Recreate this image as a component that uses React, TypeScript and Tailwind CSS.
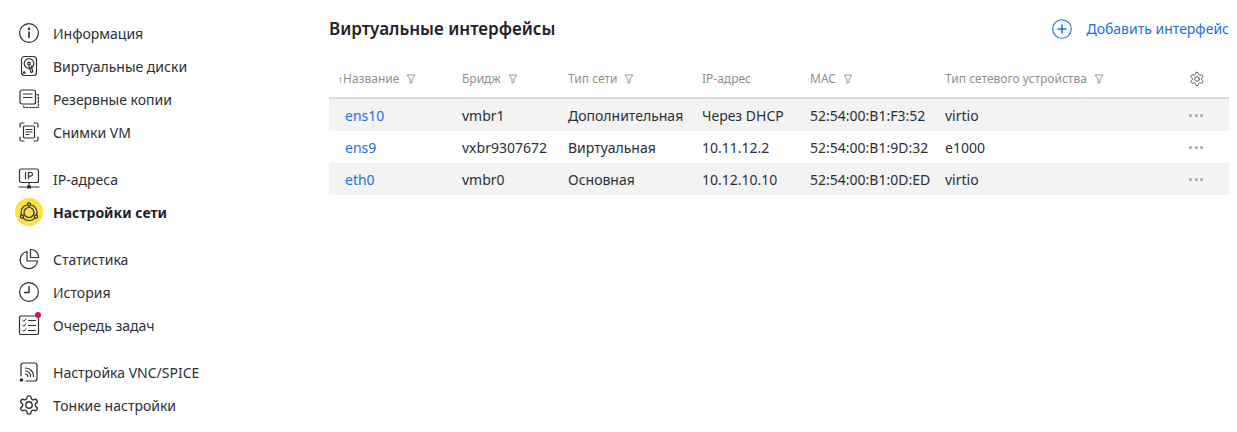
import React from 'react';

const ink = '#2b2f36';

function Svg({ children }: { children: React.ReactNode }) {
  return (
    <svg width="22" height="22" viewBox="0 0 22 22" fill="none" stroke={ink} strokeWidth="1.2" strokeLinecap="round" strokeLinejoin="round">
      {children}
    </svg>
  );
}

const InfoIcon = () => (
  <Svg>
    <circle cx="11" cy="11" r="9.4" />
    <path d="M11 10v5.5" strokeWidth="1.6" />
    <circle cx="11" cy="6.8" r="0.7" fill={ink} />
  </Svg>
);
const DiskIcon = () => (
  <Svg>
    <rect x="3.5" y="1.5" width="15" height="19" rx="3" />
    <circle cx="11" cy="8.5" r="4.8" />
    <circle cx="11" cy="8.5" r="1.3" />
    <path d="M11 11l2 6.5 1.8-.6-1.5-6" />
    <circle cx="6.3" cy="17.6" r="0.8" />
  </Svg>
);
const BackupIcon = () => (
  <Svg>
    <rect x="2" y="2" width="15.5" height="14" rx="2" />
    <path d="M5.5 6h8.5M5.5 9.5h8.5" />
    <path d="M19 6.5h.5a.8.8 0 0 1 .8.8v11.4a.8.8 0 0 1-.8.8H6.5a.8.8 0 0 1-.8-.8V18" strokeDasharray="2 1.4" />
  </Svg>
);
const SnapshotIcon = () => (
  <Svg>
    <path d="M2 6V3.5A1.5 1.5 0 0 1 3.5 2H6M16 2h2.5A1.5 1.5 0 0 1 20 3.5V6M20 16v2.5a1.5 1.5 0 0 1-1.5 1.5H16M6 20H3.5A1.5 1.5 0 0 1 2 18.500V16" />
    <rect x="5.500" y="5" width="11" height="12" rx="1.2" />
    <path d="M8 8.500h6M8 11h6M8 13.500h3" />
  </Svg>
);
const IpIcon = () => (
  <svg width="22" height="22" viewBox="0 0 22 22" fill="none" stroke={ink} strokeWidth="1.2" strokeLinecap="round" strokeLinejoin="round">
    <rect x="1.500" y="1" width="19" height="13.500" rx="2" />
    <path d="M7.500 4.500v6M10.500 10.500v-6h2.200a1.700 1.700 0 0 1 0 3.600h-2.200" />
    <path d="M11 14.500v4M1 19h20" />
    <rect x="9" y="17.500" width="4" height="3" fill={ink} stroke="none" />
  </svg>
);
const NetworkIcon = () => (
  <svg width="22" height="22" viewBox="0 0 22 22" fill="none" stroke={ink} strokeWidth="1.2">
    <circle cx="11" cy="11.500" r="8" />
    <circle cx="11" cy="11.500" r="5" />
    <circle cx="11" cy="3.500" r="1.600" fill="#fde047" />
    <circle cx="4" cy="15.500" r="1.600" fill="#fde047" />
    <circle cx="18" cy="15.500" r="1.600" fill="#fde047" />
  </svg>
);
const StatsIcon = () => (
  <Svg>
    <path d="M9 3.500A8.700 8.700 0 1 0 19.500 13H9V3.500z" />
    <path d="M12.500 1.500h1A7.500 7.500 0 0 1 20.500 9.500H12.500V1.500z" />
  </Svg>
);
const HistoryIcon = () => (
  <Svg>
    <circle cx="11" cy="11" r="9.400" />
    <path d="M11 5.500V11.500H6.500" strokeWidth="1.400" />
  </Svg>
);
const QueueIcon = () => (
  <Svg>
    <rect x="1.500" y="2" width="19" height="18.500" rx="1.500" />
    <path d="M4.500 6l1.300 1.300L8 5M4.500 11l1.300 1.300L8 10M4.500 16l1.300 1.300L8 15" strokeWidth="1" />
    <path d="M10.500 6.500h7M10.500 11.500h7M10.500 16.500h7" />
  </Svg>
);
const VncIcon = () => (
  <Svg>
    <path d="M3 15V4.500A2.500 2.500 0 0 1 5.500 2h11A2.500 2.500 0 0 1 19 4.500v13a2.500 2.500 0 0 1-2.500 2.500H8" />
    <path d="M7.500 7a8 8 0 0 1 8 8.500M7.500 10a5 5 0 0 1 5 5.500M7.500 13a2.500 2.500 0 0 1 2.300 2.500" />
    <circle cx="3.500" cy="19" r="1.800" fill={ink} stroke="none" />
  </Svg>
);

function Gear({ size, color }: { size: number; color: string }) {
  return (
    <svg width={size} height={size} viewBox="0 0 24 24" fill="none" stroke={color} strokeWidth="1.500" strokeLinecap="round" strokeLinejoin="round">
      <path d="M12.220 2h-.440a2 2 0 0 0-2 2v.180a2 2 0 0 1-1 1.730l-.430.250a2 2 0 0 1-2 0l-.150-.080a2 2 0 0 0-2.730.730l-.220.380a2 2 0 0 0 .730 2.730l.150.100a2 2 0 0 1 1 1.720v.510a2 2 0 0 1-1 1.740l-.150.090a2 2 0 0 0-.730 2.730l.220.380a2 2 0 0 0 2.730.730l.150-.080a2 2 0 0 1 2 0l.430.250a2 2 0 0 1 1 1.730V20a2 2 0 0 0 2 2h.440a2 2 0 0 0 2-2v-.180a2 2 0 0 1 1-1.730l.430-.250a2 2 0 0 1 2 0l.150.080a2 2 0 0 0 2.730-.730l.220-.390a2 2 0 0 0-.730-2.730l-.150-.080a2 2 0 0 1-1-1.740v-.500a2 2 0 0 1 1-1.740l.150-.090a2 2 0 0 0 .730-2.730l-.220-.380a2 2 0 0 0-2.730-.730l-.150.080a2 2 0 0 1-2 0l-.430-.250a2 2 0 0 1-1-1.730V4a2 2 0 0 0-2-2z" />
      <circle cx="12" cy="12" r="3.500" />
    </svg>
  );
}

function Filter() {
  return (
    <svg width="10" height="10" viewBox="0 0 10 10" fill="none" stroke="#8f8f8f" strokeWidth="0.9" strokeLinejoin="round">
      <path d="M1 1h8L6 5v3.500L4 9.200V5L1 1z" />
    </svg>
  );
}

type NavItem = { label: string; icon: React.ReactNode; active?: boolean; dot?: boolean };

const groups: NavItem[][] = [
  [
    { label: 'Информация', icon: <InfoIcon /> },
    { label: 'Виртуальные диски', icon: <DiskIcon /> },
    { label: 'Резервные копии', icon: <BackupIcon /> },
    { label: 'Снимки VM', icon: <SnapshotIcon /> },
  ],
  [
    { label: 'IP-адреса', icon: <IpIcon /> },
    { label: 'Настройки сети', icon: <NetworkIcon />, active: true },
  ],
  [
    { label: 'Статистика', icon: <StatsIcon /> },
    { label: 'История', icon: <HistoryIcon /> },
    { label: 'Очередь задач', icon: <QueueIcon />, dot: true },
  ],
  [
    { label: 'Настройка VNC/SPICE', icon: <VncIcon /> },
    { label: 'Тонкие настройки', icon: <Gear size={22} color={ink} /> },
  ],
];

const columns = [
  { title: 'Название', filter: true, sort: true },
  { title: 'Бридж', filter: true },
  { title: 'Тип сети', filter: true },
  { title: 'IP-адрес' },
  { title: 'MAC', filter: true },
  { title: 'Тип сетевого устройства', filter: true },
];

const rows = [
  ['ens10', 'vmbr1', 'Дополнительная', 'Через DHCP', '52:54:00:B1:F3:52', 'virtio'],
  ['ens9', 'vxbr9307672', 'Виртуальная', '10.11.12.2', '52:54:00:B1:9D:32', 'e1000'],
  ['eth0', 'vmbr0', 'Основная', '10.12.10.10', '52:54:00:B1:0D:ED', 'virtio'],
];

const gridCols = 'grid grid-cols-[133px_106px_134px_108px_135px_1fr_40px]';

export default function App() {
  return (
    <div className="flex h-[432px] w-[1237px] overflow-hidden bg-white font-['Noto_Sans',sans-serif] text-[14px] text-[#2b2f36]">
      <aside className="flex w-[329px] shrink-0 flex-col gap-[15px] pl-[18px] pt-[17px]">
        {groups.map((group, i) => (
          <div key={i} className="flex flex-col gap-[1px]">
            {group.map((item) => (
              <div key={item.label} className="flex h-[32px] items-center gap-[13px]">
                <div className="relative flex h-[22px] w-[22px] items-center justify-center">
                  {item.active && <div className="absolute -inset-[3px] rounded-full bg-[#fde047]" />}
                  <div className="relative flex">{item.icon}</div>
                  {item.dot && <div className="absolute -right-[1px] -top-[2px] h-[6px] w-[6px] rounded-full bg-[#e5094f]" />}
                </div>
                <span className={item.active ? 'font-bold text-[#1f2329]' : ''}>{item.label}</span>
              </div>
            ))}
          </div>
        ))}
      </aside>

      <main className="w-[900px] shrink-0">
        <div className="flex h-[61px] items-start justify-between pt-[15px]">
          <h1 className="text-[17px] font-semibold leading-[28px] text-[#1f2329]">Виртуальные интерфейсы</h1>
          <button className="flex items-center gap-[14px] pt-[2px] text-[#1a6fe0]">
            <svg width="20" height="20" viewBox="0 0 20 20" fill="none" stroke="#1a6fe0" strokeLinecap="round">
              <circle cx="10" cy="10" r="9.300" strokeWidth="1.100" />
              <path d="M10 6v8M6 10h8" strokeWidth="1.500" />
            </svg>
            <span className="leading-[24px]">Добавить интерфейс</span>
          </button>
        </div>

        <div className={`${gridCols} h-[38px] items-center border-b-2 border-[#d9d9d9] text-[12px] text-[#8f8f8f]`}>
          {columns.map((col, i) => (
            <div key={col.title} className={`flex items-center gap-[7px] ${i === 0 ? 'pl-[9px]' : ''}`}>
              <span className="flex items-center">
                {col.sort && <span className="text-[10px] text-[#666]">↑</span>}
                {col.title}
              </span>
              {col.filter && <Filter />}
            </div>
          ))}
          <div className="flex items-center"><Gear size={16} color="#555" /></div>
        </div>

        {rows.map((row, r) => (
          <div key={row[0]} className={`${gridCols} h-[32px] items-center ${r % 2 === 0 ? 'bg-[#f3f3f3]' : ''}`}>
            {row.map((cell, c) => (
              <div key={c} className={c === 0 ? 'pl-[16px] text-[#1a6fe0]' : ''}>{cell}</div>
            ))}
            <div className="flex gap-[2.500px]">
              <span className="h-[3px] w-[3px] rounded-full bg-[#a3a3a3]" />
              <span className="h-[3px] w-[3px] rounded-full bg-[#a3a3a3]" />
              <span className="h-[3px] w-[3px] rounded-full bg-[#a3a3a3]" />
            </div>
          </div>
        ))}
      </main>
    </div>
  );
}
